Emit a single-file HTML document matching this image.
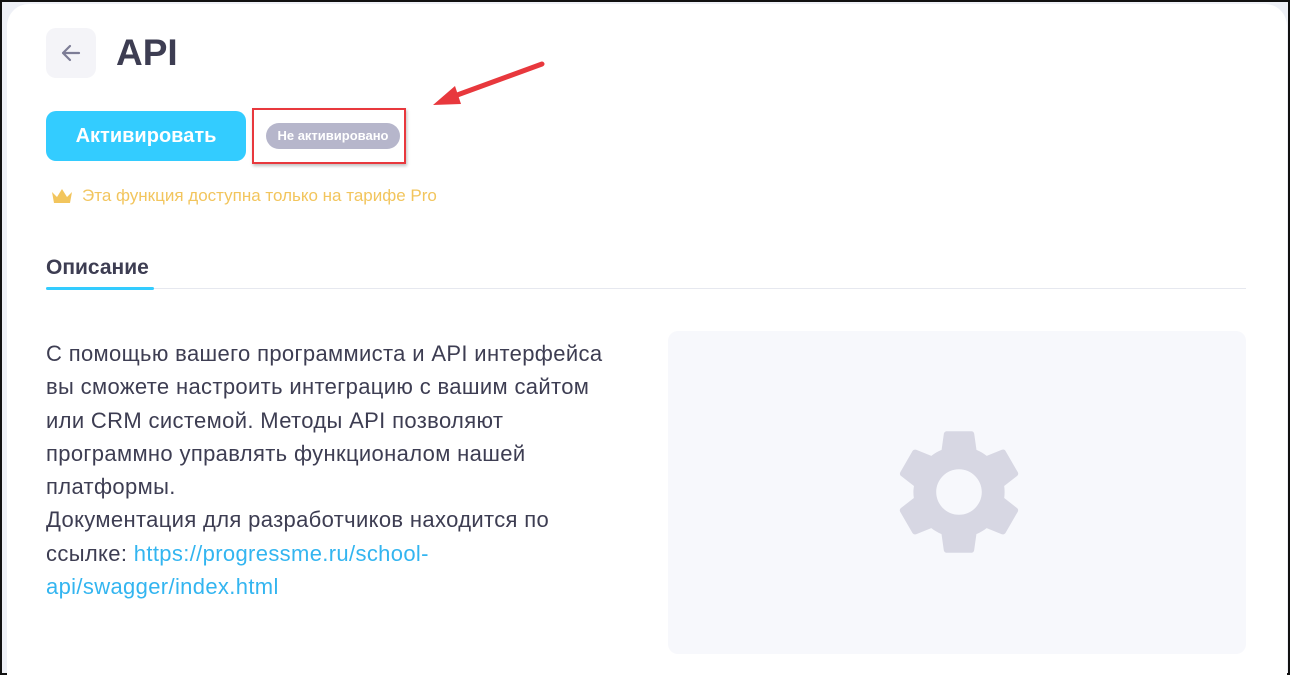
<!DOCTYPE html>
<html><head><meta charset="utf-8"><style>
*{margin:0;padding:0;box-sizing:border-box}
html,body{width:1290px;height:675px;overflow:hidden}
body{background:#eef0f6;font-family:"Liberation Sans","DejaVu Sans",sans-serif;position:relative;border:2px solid #111}
.card{position:absolute;left:5px;top:2px;width:1280px;height:680px;background:#fff;border-radius:22px 22px 0 0}
.back{position:absolute;left:44px;top:26px;width:50px;height:50px;background:#f4f4f8;border-radius:10px}
h1{position:absolute;left:114px;top:30px;font-size:37px;font-weight:bold;color:#3d3d52}
.btn{position:absolute;left:44px;top:109px;width:200px;height:50px;background:#33ccff;border-radius:10px;color:#fff;font-weight:bold;font-size:20px;line-height:50px;text-align:center}
.badge{position:absolute;left:264px;top:121px;width:134px;height:26px;background:#b6b6cb;border-radius:13px;color:#fff;font-weight:bold;font-size:13px;line-height:26px;text-align:center}
.redbox{position:absolute;left:250px;top:106px;height:56px;border:2px solid #e8383d;width:154px;box-shadow:1px 2px 3px rgba(0,0,0,.25)}
.pro{position:absolute;left:80px;top:184px;font-size:17px;color:#f2c55d}
.tab{position:absolute;left:44px;top:254px;font-size:21px;font-weight:bold;color:#3d3d52}
.tabline{position:absolute;left:44px;top:285px;width:108px;height:3px;background:#33ccff;border-radius:2px}
.sep{position:absolute;left:44px;top:286px;width:1200px;height:1px;background:#e6e8ef}
.text{position:absolute;left:44px;top:335px;width:620px;font-size:22px;line-height:33.3px;letter-spacing:0.35px;color:#3d3d52;white-space:nowrap}
.text a{color:#33b5f0;text-decoration:none}
.panel{position:absolute;left:666px;top:329px;width:578px;height:323px;background:#f7f8fc;border-radius:10px}
</style></head><body>
<div class="card"></div>
<div class="back"><svg width="50" height="50" viewBox="0 0 50 50"><path d="M33 25H17M24 18l-7 7 7 7" stroke="#7d7d96" stroke-width="2.2" fill="none" stroke-linecap="round" stroke-linejoin="round"/></svg></div>
<h1>API</h1>
<div class="btn">Активировать</div>
<div class="badge">Не активировано</div>
<div class="redbox"></div>
<svg style="position:absolute;left:425px;top:56px" width="120" height="55" viewBox="0 0 120 55"><path d="M115 6L22 40" stroke="#e8383d" stroke-width="5" stroke-linecap="round"/><path d="M6 47L28 28L34 46Z" fill="#e8383d"/></svg>
<svg style="position:absolute;left:48px;top:186px" width="24" height="18" viewBox="0 0 24 18"><path d="M2 4L7 9L12 1L17 9L22 4L20 15H4Z" fill="#f2c55d"/></svg>
<div class="pro">Эта функция доступна только на тарифе Pro</div>
<div class="tab">Описание</div>
<div class="sep"></div>
<div class="tabline"></div>
<div class="text">С помощью вашего программиста и API интерфейса<br>вы сможете настроить интеграцию с вашим сайтом<br>или CRM системой. Методы API позволяют<br>программно управлять функционалом нашей<br>платформы.<br>Документация для разработчиков находится по<br>ссылке: <a>https://progressme.ru/school-</a><br><a>api/swagger/index.html</a></div>
<div class="panel"></div>
<svg style="position:absolute;left:881px;top:414px" width="152" height="152" viewBox="0 0 24 24"><path fill="#d7d7e3" d="M19.14 12.94c.04-.3.06-.61.06-.94 0-.32-.02-.64-.07-.94l2.03-1.58a.49.49 0 0 0 .12-.61l-1.92-3.32a.488.488 0 0 0-.59-.22l-2.39.96c-.5-.38-1.030-.7-1.62-.94l-.36-2.54a.484.484 0 0 0-.48-.41h-3.840c-.24 0-.43.17-.47.41l-.36 2.540c-.59.24-1.13.57-1.62.94l-2.39-.96c-.22-.08-.47 0-.59.22L2.74 8.87c-.12.21-.08.47.12.61l2.03 1.58c-.05.3-.09.63-.09.94s.02.64.07.94l-2.03 1.58a.49.49 0 0 0-.12.61l1.92 3.32c.12.22.37.29.59.22l2.39-.96c.5.38 1.03.7 1.62.94l.36 2.54c.05.24.24.41.48.41h3.84c.24 0 .44-.17.47-.41l.36-2.54c.59-.24 1.13-.56 1.62-.94l2.39.96c.22.08.47 0 .59-.22l1.920-3.32c.12-.22.07-.47-.12-.61l-2.01-1.58zM12 15.6c-1.98 0-3.6-1.62-3.6-3.6s1.62-3.6 3.6-3.6 3.6 1.62 3.6 3.6-1.62 3.6-3.6 3.6z"/></svg>
</body></html>
